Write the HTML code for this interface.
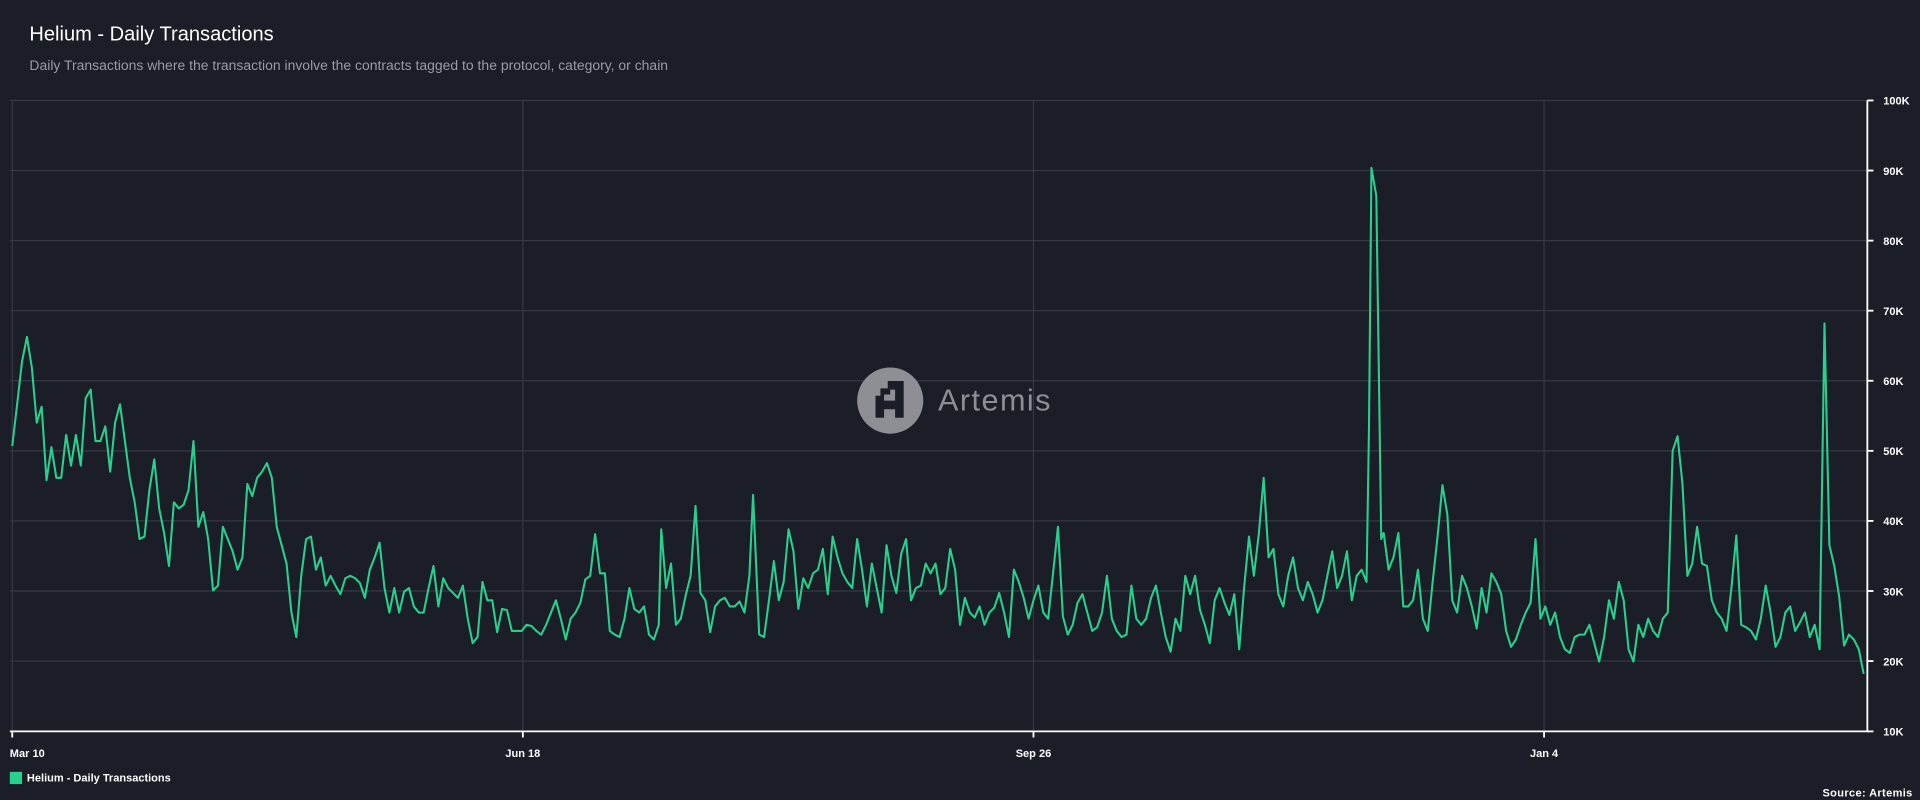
<!DOCTYPE html>
<html><head><meta charset="utf-8"><style>
html,body{margin:0;padding:0;background:#1b1d27;width:1920px;height:800px;overflow:hidden}
svg{display:block}
text{font-family:"Liberation Sans",Arial,sans-serif}
</style></head><body>
<svg width="1920" height="800" viewBox="0 0 1568 653" preserveAspectRatio="none">
<rect width="1568" height="653" fill="#1b1d27"/>
<text x="24" y="33" font-size="16.4" fill="#ffffff">Helium - Daily Transactions</text>
<text x="24" y="57" font-size="11.4" fill="#9a9ca4">Daily Transactions where the transaction involve the contracts tagged to the protocol, category, or chain</text>
<g stroke="#363944" stroke-width="1">
<line x1="8" y1="82" x2="1525" y2="82"/><line x1="8" y1="139.2" x2="1525" y2="139.2"/>
<line x1="8" y1="196.4" x2="1525" y2="196.4"/><line x1="8" y1="253.6" x2="1525" y2="253.6"/>
<line x1="8" y1="310.8" x2="1525" y2="310.8"/><line x1="8" y1="368" x2="1525" y2="368"/>
<line x1="8" y1="425.2" x2="1525" y2="425.2"/><line x1="8" y1="482.4" x2="1525" y2="482.4"/>
<line x1="8" y1="539.6" x2="1525" y2="539.6"/>
<line x1="10" y1="82" x2="10" y2="597"/><line x1="427" y1="82" x2="427" y2="597"/>
<line x1="844" y1="82" x2="844" y2="597"/><line x1="1261" y1="82" x2="1261" y2="597"/>
</g>
<circle cx="727" cy="327" r="27" fill="#8e8f95"/>
<text x="766" y="335" font-size="25" letter-spacing="1.2" fill="#8e8f95">Artemis</text>
<path d="M715 341 V323 H719 V317 H725 V311 H738 V341 H731 V334 H722 V341 Z M722 327 H731 V318 H727 V322 H722 Z" fill="#1b1d27" fill-rule="evenodd"/>
<polyline fill="none" stroke="#27d08c" stroke-width="1.7" stroke-linejoin="round" points="10,364 14,330 18,295 22,275 26,300 30,345 34,332 38,392 42,365 46,390 50,390 54,355 58,380 62,355 66,380 70,325 74,318 78,360 82,360 86,348 90,385 94,345 98,330 102,360 106,390 110,410 114,440 118,438 122,400 126,375 130,415 134,435 138,462 142,410 146,415 150,412 154,400 158,360 162,430 166,418 170,440 174,482 178,478 182,430 186,440 190,450 194,465 198,455 202,395 206,405 210,390 214,385 218,378 222,390 226,430 230,445 234,460 238,500 242,520 246,470 250,440 254,438 258,465 262,455 266,478 270,470 274,478 278,485 282,472 286,470 290,472 294,476 298,488 302,465 306,455 310,443 314,480 318,500 322,480 326,500 330,483 334,480 338,495 342,500 346,500 350,480 354,462 358,495 362,472 366,480 370,484 374,488 378,478 382,505 386,525 390,520 394,475 398,490 402,490 406,516 410,497 414,498 418,515 422,515 426,515 430,510 434,511 438,515 442,518 446,510 450,500 454,490 458,505 462,522 466,505 470,500 474,492 478,473 482,470 486,436 490,468 494,468 498,515 502,518 506,520 510,505 514,480 518,497 522,500 526,495 530,518 534,522 538,510 540,432 544,480 548,460 552,510 556,505 560,486 564,470 568,413 572,484 576,490 580,516 584,495 588,490 592,488 596,495 600,495 604,491 608,500 612,470 615,404 620,518 624,520 628,490 632,458 636,490 640,475 644,432 648,450 652,497 656,472 660,480 664,468 668,465 672,448 676,485 680,438 684,455 688,468 692,475 696,480 700,440 704,465 708,495 712,460 716,480 720,500 724,445 728,470 732,484 736,452 740,440 744,490 748,480 752,478 756,460 760,468 764,460 768,485 772,480 776,448 780,465 784,510 788,488 792,500 796,504 800,495 804,510 808,500 812,496 816,484 820,500 824,520 828,465 832,475 836,488 840,505 844,490 848,478 852,500 856,505 860,468 864,430 868,503 872,518 876,510 880,492 884,485 888,500 892,515 896,512 900,500 904,470 908,505 912,515 916,520 920,518 924,478 928,505 932,510 936,505 940,488 944,478 948,500 952,520 956,532 960,505 964,515 968,470 972,485 976,470 980,498 984,510 988,525 992,490 996,480 1000,492 1004,502 1008,485 1012,530 1016,480 1020,438 1024,470 1028,436 1032,390 1036,455 1040,448 1044,485 1048,495 1052,470 1056,455 1060,480 1064,490 1068,475 1072,485 1076,500 1080,490 1084,470 1088,450 1092,480 1096,470 1100,450 1104,490 1108,470 1112,465 1116,475 1118,350 1120,137 1124,160 1128,440 1130,435 1134,465 1138,455 1142,435 1146,495 1150,495 1154,490 1158,465 1162,505 1166,515 1170,475 1174,438 1178,396 1182,420 1186,490 1190,500 1194,470 1198,480 1202,495 1206,513 1210,480 1214,500 1218,468 1222,475 1226,485 1230,515 1234,528 1238,522 1242,510 1246,500 1250,492 1254,440 1258,505 1262,495 1266,510 1270,500 1274,520 1278,530 1282,533 1286,520 1290,518 1294,518 1298,510 1302,525 1306,540 1310,520 1314,490 1318,505 1322,475 1326,490 1330,530 1334,540 1338,510 1342,520 1346,505 1350,515 1354,520 1358,505 1362,500 1366,368 1370,356 1374,395 1378,470 1382,460 1386,430 1390,460 1394,462 1398,490 1402,500 1406,505 1410,515 1414,480 1418,437 1422,510 1426,512 1430,515 1434,522 1438,505 1442,478 1446,500 1450,528 1454,520 1458,500 1462,495 1466,515 1470,508 1474,500 1478,520 1482,510 1486,530 1490,264 1494,445 1498,462 1502,487 1506,527 1510,518 1514,522 1518,530 1522,550"/>
<g stroke="#ffffff" stroke-width="1.5">
<line x1="8" y1="597" x2="1526" y2="597"/>
<line x1="1525" y1="82" x2="1525" y2="597"/>
<line x1="10" y1="597" x2="10" y2="602"/><line x1="427" y1="597" x2="427" y2="602"/>
<line x1="844" y1="597" x2="844" y2="602"/><line x1="1261" y1="597" x2="1261" y2="602"/>
<line x1="1525" y1="82" x2="1530" y2="82"/><line x1="1525" y1="139.2" x2="1530" y2="139.2"/>
<line x1="1525" y1="196.4" x2="1530" y2="196.4"/><line x1="1525" y1="253.6" x2="1530" y2="253.6"/>
<line x1="1525" y1="310.8" x2="1530" y2="310.8"/><line x1="1525" y1="368" x2="1530" y2="368"/>
<line x1="1525" y1="425.2" x2="1530" y2="425.2"/><line x1="1525" y1="482.4" x2="1530" y2="482.4"/>
<line x1="1525" y1="539.6" x2="1530" y2="539.6"/><line x1="1525" y1="597" x2="1530" y2="597"/>
</g>
<g fill="#ffffff" font-size="9" font-weight="bold">
<text x="1538" y="85.5">100K</text><text x="1538" y="142.7">90K</text>
<text x="1538" y="199.9">80K</text><text x="1538" y="257.1">70K</text>
<text x="1538" y="314.3">60K</text><text x="1538" y="371.5">50K</text>
<text x="1538" y="428.7">40K</text><text x="1538" y="485.9">30K</text>
<text x="1538" y="543.1">20K</text><text x="1538" y="600.5">10K</text>
<text x="8" y="618">Mar 10</text>
<text x="427" y="618" text-anchor="middle">Jun 18</text>
<text x="844" y="618" text-anchor="middle">Sep 26</text>
<text x="1261" y="618" text-anchor="middle">Jan 4</text>
<text x="22" y="638">Helium - Daily Transactions</text>
<text x="1562" y="650" text-anchor="end" letter-spacing="0.3">Source: Artemis</text>
</g>
<rect x="8" y="630" width="10" height="10" fill="#27d08c"/>
</svg>
</body></html>
